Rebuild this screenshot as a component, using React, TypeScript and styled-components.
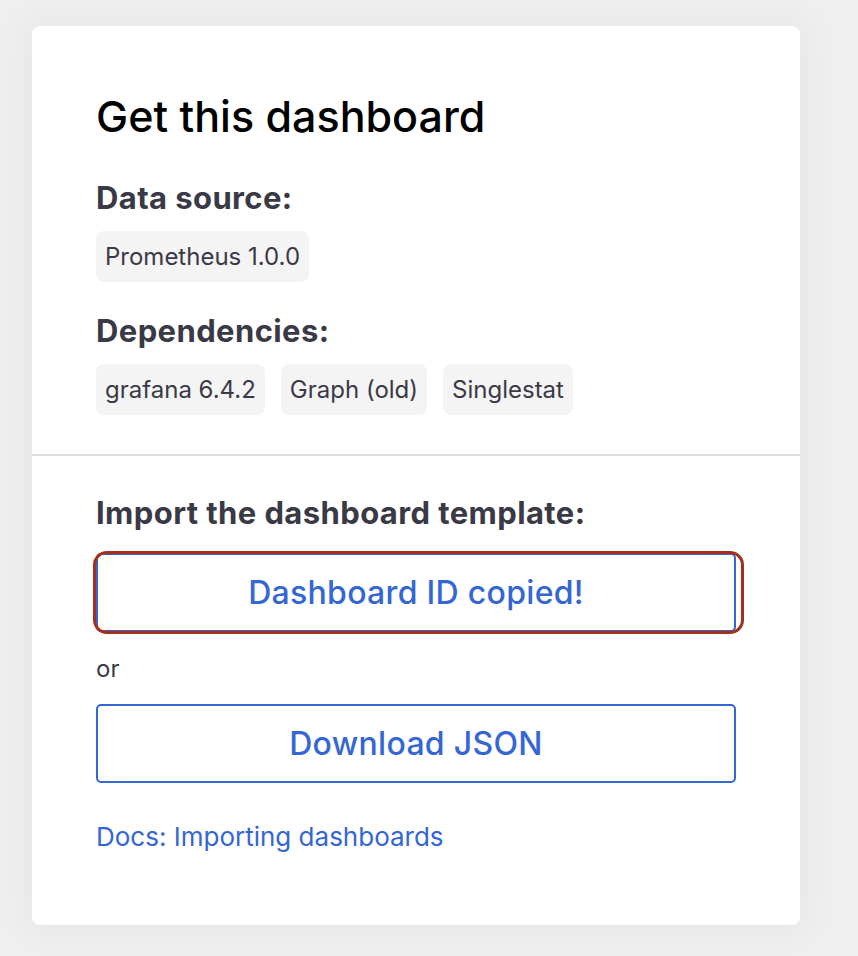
import React from "react";
import styled, { createGlobalStyle } from "styled-components";

const GlobalStyle = createGlobalStyle`
  html, body {
    margin: 0;
    padding: 0;
    background: #efefef;
    font-family: Inter, "Noto Sans", "Liberation Sans", sans-serif;
  }
  * { box-sizing: border-box; }
`;

const Page = styled.div`
  padding: 26px 0 0 32px;
  min-height: 956px;
`;

const Card = styled.section`
  width: 768px;
  min-height: 899px;
  background: #ffffff;
  border-radius: 8px;
  box-shadow: 0 0 36px 6px rgba(0, 0, 0, 0.045);
  display: flex;
  flex-direction: column;
`;

const TopSection = styled.div`
  padding: 66px 64px 39px;
  display: flex;
  flex-direction: column;
`;

const BottomSection = styled.div`
  padding: 40px 64px 64px;
  display: flex;
  flex-direction: column;
`;

const Divider = styled.hr`
  margin: 0;
  border: 0;
  height: 2px;
  background: #dcdcdc;
`;

const Title = styled.h2`
  margin: 0;
  font-size: 43px;
  line-height: 48px;
  font-weight: 500;
  color: #000;
`;

const Subheading = styled.h3<{ $top: number }>`
  margin: ${(p) => p.$top}px 0 0;
  font-size: 31px;
  line-height: 34px;
  font-weight: 700;
  letter-spacing: 0.4px;
  color: #3a3946;
`;

const TagRow = styled.div`
  display: flex;
  gap: 16px;
  margin-top: 16px;
`;

const Tag = styled.span`
  display: inline-flex;
  align-items: center;
  height: 51px;
  padding: 0 9px;
  border-radius: 8px;
  background: #f4f4f4;
  color: #3a3946;
  font-size: 24px;
`;

const ButtonWrap = styled.div<{ $focused?: boolean }>`
  position: relative;
  margin-top: ${(p) => (p.$focused ? 23 : 0)}px;
  &::after {
    content: "";
    display: ${(p) => (p.$focused ? "block" : "none")};
    position: absolute;
    left: -3px;
    right: -8px;
    top: -2px;
    bottom: -2px;
    border: 3.5px solid #a53019;
    border-radius: 14px;
    pointer-events: none;
  }
`;

const OutlineButton = styled.button`
  display: flex;
  align-items: center;
  justify-content: center;
  width: 100%;
  height: 79px;
  border: 2px solid #3466d4;
  border-radius: 5px;
  background: #fff;
  color: #3466d4;
  font-family: inherit;
  font-size: 32px;
  font-weight: 500;
  letter-spacing: 0.3px;
  cursor: pointer;
`;

const OrText = styled.p`
  margin: 0;
  height: 72px;
  display: flex;
  align-items: center;
  font-size: 24px;
  color: #3a3946;
`;

const DocsLink = styled.a`
  margin-top: 39px;
  font-size: 26px;
  line-height: 30px;
  color: #3466d4;
  text-decoration: none;
`;

export default function App() {
  return (
    <>
      <GlobalStyle />
      <Page>
        <Card>
          <TopSection>
            <Title>Get this dashboard</Title>
            <Subheading $top={41}>Data source:</Subheading>
            <TagRow>
              <Tag>Prometheus 1.0.0</Tag>
            </TagRow>
            <Subheading $top={32}>Dependencies:</Subheading>
            <TagRow>
              <Tag>grafana 6.4.2</Tag>
              <Tag>Graph (old)</Tag>
              <Tag>Singlestat</Tag>
            </TagRow>
          </TopSection>
          <Divider />
          <BottomSection>
            <Subheading $top={0}>Import the dashboard template:</Subheading>
            <ButtonWrap $focused>
              <OutlineButton>Dashboard ID copied!</OutlineButton>
            </ButtonWrap>
            <OrText>or</OrText>
            <ButtonWrap>
              <OutlineButton>Download JSON</OutlineButton>
            </ButtonWrap>
            <DocsLink href="#">Docs: Importing dashboards</DocsLink>
          </BottomSection>
        </Card>
      </Page>
    </>
  );
}
